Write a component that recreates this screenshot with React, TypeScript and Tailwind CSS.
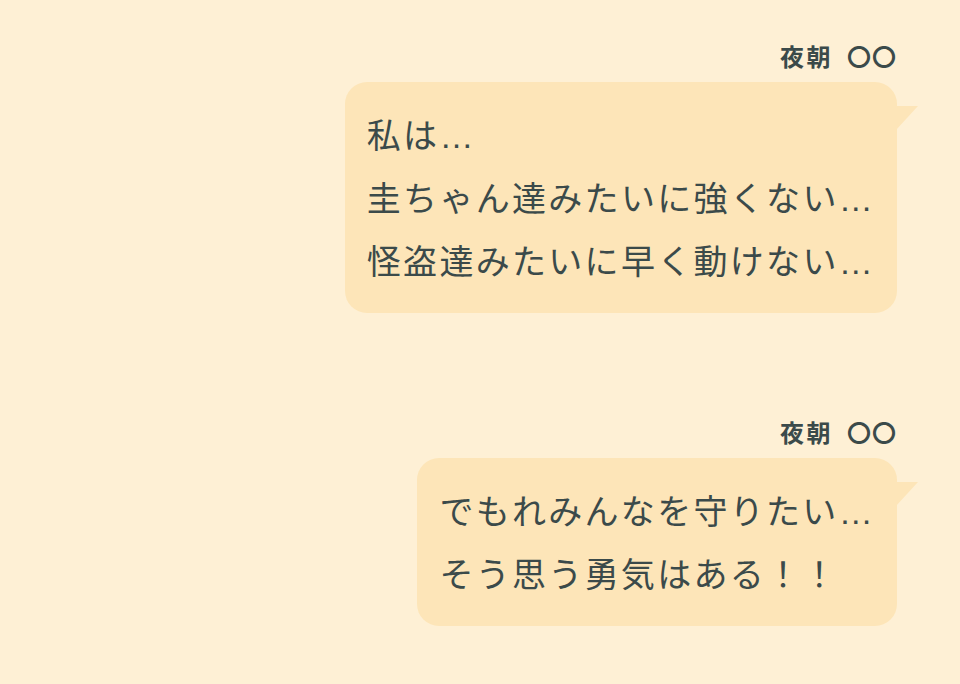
import React from "react";

const font = { fontFamily: '"Noto Sans CJK JP", "Noto Sans", sans-serif' };

function Tail() {
  return (
    <svg
      className="absolute right-[-21px] top-[24px]"
      width="22"
      height="24"
      viewBox="0 0 22 24"
    >
      <polygon points="0,0 22,0 0,24" fill="#fde5b8" />
    </svg>
  );
}

function Line({ text }: { text: string }) {
  const parts = text.split("…");
  return (
    <div className="h-[63px] text-[34px] leading-[63px] tracking-[2.3px] text-[#3b4a4a] whitespace-nowrap">
      {parts.map((p, i) => (
        <React.Fragment key={i}>
          {p}
          {i < parts.length - 1 && (
            <span
              className="leading-none"
              style={{ fontFamily: '"Liberation Sans", sans-serif' }}
            >
              …
            </span>
          )}
        </React.Fragment>
      ))}
    </div>
  );
}

function Message({ name, lines }: { name: string; lines: string[] }) {
  const [a, b] = name.split(" ");
  return (
    <div className="flex flex-col items-end">
      <div className="text-[24px] leading-[28px] font-bold text-[#3b4a4a] whitespace-nowrap">
        <span className="tracking-[2.5px]">{a}</span>
        <span className="ml-[14px] tracking-[1px]">{b}</span>
      </div>
      <div className="relative mt-[12px] rounded-[22px] bg-[#fde5b8] px-[22px] pt-[20px] pb-[22px]">
        <Tail />
        {lines.map((l, i) => (
          <Line key={i} text={l} />
        ))}
      </div>
    </div>
  );
}

export default function App() {
  return (
    <div
      className="w-[960px] h-[684px] bg-[#fef0d5] flex flex-col items-end pr-[63px] pt-[42px] gap-[105px] overflow-hidden"
      style={font}
    >
      <Message
        name="夜朝 〇〇"
        lines={["私は…", "圭ちゃん達みたいに強くない…", "怪盗達みたいに早く動けない…"]}
      />
      <Message
        name="夜朝 〇〇"
        lines={["でもれみんなを守りたい…", "そう思う勇気はある！！"]}
      />
    </div>
  );
}
